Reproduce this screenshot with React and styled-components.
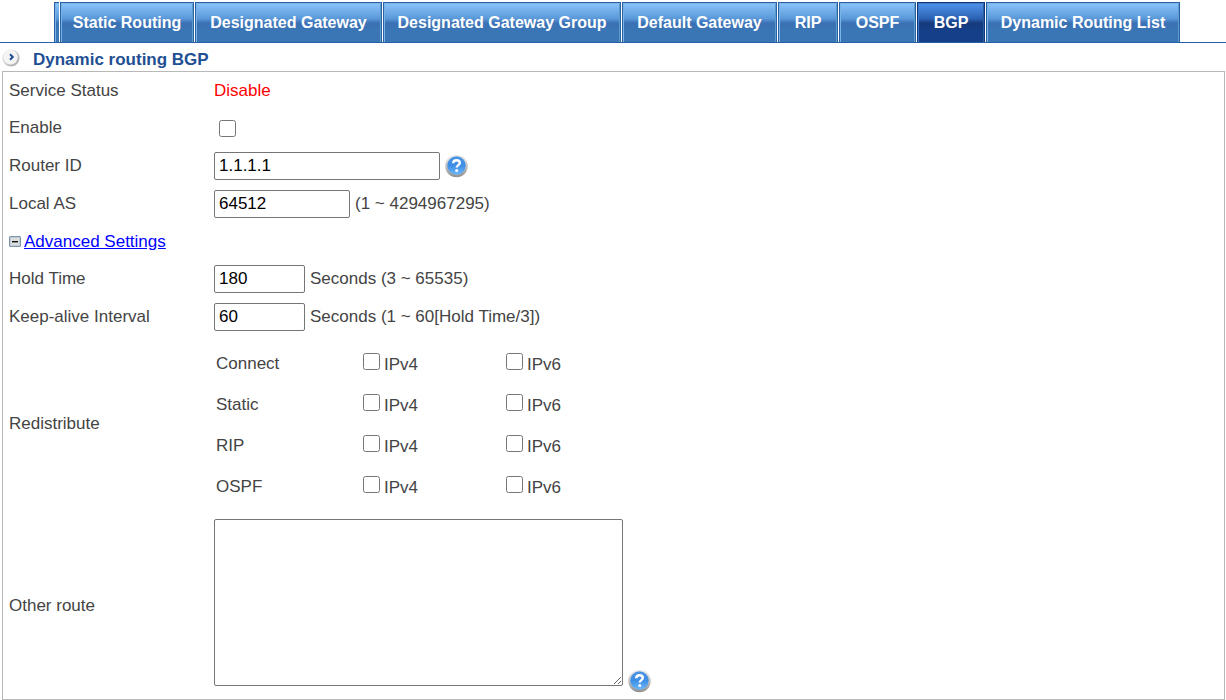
import React, { useState } from "react";
import styled, { createGlobalStyle, css } from "styled-components";

const tabs = [
  { label: "Static Routing", width: 134 },
  { label: "Designated Gateway", width: 187 },
  { label: "Designated Gateway Group", width: 238 },
  { label: "Default Gateway", width: 155 },
  { label: "RIP", width: 60 },
  { label: "OSPF", width: 77 },
  { label: "BGP", width: 68 },
  { label: "Dynamic Routing List", width: 194 },
];

const sources = ["Connect", "Static", "RIP", "OSPF"];
const versions = ["IPv4", "IPv6"];

function HelpIcon() {
  return (
    <svg width="24" height="24" viewBox="0 0 24 24" aria-hidden="true">
      <defs>
        <linearGradient id="helpRing" x1="0" y1="0" x2="0" y2="1">
          <stop offset="0" stopColor="#f0f0f0" />
          <stop offset="0.5" stopColor="#c4c4c4" />
          <stop offset="1" stopColor="#8f8f8f" />
        </linearGradient>
        <linearGradient id="helpFill" x1="0" y1="0" x2="0" y2="1">
          <stop offset="0" stopColor="#4c94e4" />
          <stop offset="0.5" stopColor="#3d8ee6" />
          <stop offset="1" stopColor="#6cb8fa" />
        </linearGradient>
      </defs>
      <circle cx="11.5" cy="12" r="11.3" fill="url(#helpRing)" />
      <circle cx="11.5" cy="11.5" r="9.2" fill="url(#helpFill)" />
      <path
        d="M8.2 9.3C8.300 7.300 9.700 6.300 11.500 6.300c2 0 3.300 1 3.300 2.700 0 2.200-3.100 2.100-3.100 4.600"
        fill="none"
        stroke="#fff"
        strokeWidth="2.4"
      />
      <circle cx="11.700" cy="16.600" r="1.500" fill="#fff" />
    </svg>
  );
}

function TitleIcon() {
  return (
    <svg width="18" height="18" viewBox="0 0 18 18" aria-hidden="true">
      <defs>
        <linearGradient id="titleRing" x1="0" y1="0" x2="1" y2="1">
          <stop offset="0" stopColor="#ececec" />
          <stop offset="1" stopColor="#a8a8a8" />
        </linearGradient>
      </defs>
      <circle cx="9" cy="9" r="8.6" fill="url(#titleRing)" />
      <circle cx="8.5" cy="8.3" r="7.2" fill="#f4f4f4" />
      <path d="M8 5.200l2.800 2.800L8 10.800" fill="none" stroke="#24508f" strokeWidth="2" />
    </svg>
  );
}

function MinusIcon() {
  return (
    <svg width="12" height="11" viewBox="0 0 12 11" aria-hidden="true">
      <rect x="0.5" y="0.5" width="11" height="10" rx="0.5" fill="#dcdedc" stroke="#8094a8" />
      <rect x="1.5" y="1.5" width="9" height="8" fill="none" stroke="#c0ccd8" />
      <rect x="3" y="5" width="6" height="1.4" fill="#111" />
    </svg>
  );
}

function App() {
  const [enable, setEnable] = useState(false);
  const [routerId, setRouterId] = useState("1.1.1.1");
  const [localAs, setLocalAs] = useState("64512");
  const [holdTime, setHoldTime] = useState("180");
  const [keepAlive, setKeepAlive] = useState("60");
  const [otherRoute, setOtherRoute] = useState("");
  const [advanced, setAdvanced] = useState(true);

  const toggleAdvanced = (e) => {
    e.preventDefault();
    setAdvanced(!advanced);
  };

  return (
    <>
      <GlobalStyle />
      <TabBar>
        <TabEdge />
        {tabs.map((tab) => (
          <Tab key={tab.label} href="#" $width={tab.width} $active={tab.label === "BGP"}>
            {tab.label}
          </Tab>
        ))}
      </TabBar>
      <TitleBar>
        <TitleIcon />
        <h1>Dynamic routing BGP</h1>
      </TitleBar>
      <Panel>
        <Row $plain>
          <span>Service Status</span>
          <Status>Disable</Status>
        </Row>
        <Row>
          <label htmlFor="enable">Enable</label>
          <Field>
            <EnableBox
              id="enable"
              checked={enable}
              onChange={(e) => setEnable(e.target.checked)}
            />
          </Field>
        </Row>
        <Row>
          <label htmlFor="routerId">Router ID</label>
          <Field>
            <TextInput
              id="routerId"
              $width={226}
              value={routerId}
              onChange={(e) => setRouterId(e.target.value)}
            />
            <HelpButton type="button" aria-label="Router ID help">
              <HelpIcon />
            </HelpButton>
          </Field>
        </Row>
        <Row>
          <label htmlFor="localAs">Local AS</label>
          <Field>
            <TextInput
              id="localAs"
              $width={136}
              value={localAs}
              onChange={(e) => setLocalAs(e.target.value)}
            />
            <span>(1 ~ 4294967295)</span>
          </Field>
        </Row>
        <Row $plain>
          <Advanced href="#" onClick={toggleAdvanced}>
            <MinusIcon />
            <span>Advanced Settings</span>
          </Advanced>
        </Row>
        {advanced && (
          <>
            <Row>
              <label htmlFor="holdTime">Hold Time</label>
              <Field>
                <TextInput
                  id="holdTime"
                  $width={91}
                  value={holdTime}
                  onChange={(e) => setHoldTime(e.target.value)}
                />
                <span>Seconds (3 ~ 65535)</span>
              </Field>
            </Row>
            <Row>
              <label htmlFor="keepAlive">Keep-alive Interval</label>
              <Field>
                <TextInput
                  id="keepAlive"
                  $width={91}
                  value={keepAlive}
                  onChange={(e) => setKeepAlive(e.target.value)}
                />
                <span>Seconds (1 ~ 60[Hold Time/3])</span>
              </Field>
            </Row>
            <Row>
              <span>Redistribute</span>
              <Redistribute>
                {sources.map((source) => (
                  <SourceRow key={source}>
                    <span>{source}</span>
                    {versions.map((version) => (
                      <CheckLabel key={version}>
                        <Checkbox />
                        {version}
                      </CheckLabel>
                    ))}
                  </SourceRow>
                ))}
              </Redistribute>
            </Row>
            <Row>
              <label htmlFor="otherRoute">Other route</label>
              <AreaField>
                <TextArea
                  id="otherRoute"
                  value={otherRoute}
                  onChange={(e) => setOtherRoute(e.target.value)}
                />
                <HelpButton type="button" aria-label="Other route help">
                  <HelpIcon />
                </HelpButton>
              </AreaField>
            </Row>
          </>
        )}
      </Panel>
    </>
  );
}

const GlobalStyle = createGlobalStyle`
  * {
    box-sizing: border-box;
  }
  body {
    margin: 0;
    background: #fff;
    color: #444;
    font-family: "Liberation Sans", Arial, sans-serif;
    font-size: 17px;
    line-height: 20px;
  }
`;

const tabFill = css`
  background: linear-gradient(#8cc4fb, #5a98d8 40%, #3a70b4 52%, #3a76b6 70%);
  border: 1px solid #2a60a6;
  border-bottom: none;
  box-shadow: inset 1px 1px #7ab4e4, inset -1px 0 #5c9cc8;
`;

const TabBar = styled.nav`
  display: flex;
  gap: 1px;
  padding: 2px 0 0 54px;
  border-bottom: 1px solid #2a60a6;
`;

const TabEdge = styled.span`
  ${tabFill}
  width: 5px;
  border-right: none;
  box-shadow: inset 1px 1px #7ab4e4;
`;

const Tab = styled.a`
  ${tabFill}
  width: ${(props) => props.$width}px;
  height: 40px;
  color: #fff;
  font-size: 16px;
  font-weight: bold;
  line-height: 40px;
  text-align: center;
  white-space: nowrap;
  text-decoration: none;

  ${(props) =>
    props.$active &&
    css`
      background: linear-gradient(#5094ec, #2c62b4 40%, #163a7c 52%, #153f88 70%);
      border-color: #12367a;
      box-shadow: inset 1px 1px #3c78c8, inset -1px 0 #2a609c;
    `}
`;

const TitleBar = styled.header`
  display: flex;
  align-items: center;
  gap: 13px;
  height: 28px;
  padding: 2px 2px 0;

  > h1 {
    margin: 0;
    padding-top: 3px;
    color: #1f4f93;
    font-size: 17px;
  }
`;

const Panel = styled.form`
  margin: 0 1px 0 2px;
  border: 1px solid #b8b8b8;
`;

const Row = styled.div`
  display: grid;
  grid-template-columns: 205px 1fr;
  align-items: center;
  min-height: ${(props) => (props.$plain ? 37 : 38)}px;
  padding: 0 6px;
`;

const Status = styled.span`
  color: #f00;
`;

const Field = styled.div`
  display: flex;
  align-items: center;
  gap: 5px;
`;

const TextInput = styled.input`
  width: ${(props) => props.$width}px;
  height: 28px;
  padding: 0 4px;
  border: 1px solid #767676;
  border-radius: 2px;
  color: #000;
  font: inherit;
`;

const Checkbox = styled.input.attrs({ type: "checkbox" })`
  width: 17px;
  height: 17px;
  margin: 0;
`;

const EnableBox = styled(Checkbox)`
  margin-left: 5px;
`;

const HelpButton = styled.button`
  display: flex;
  padding: 0;
  border: none;
  background: none;
  cursor: pointer;
`;

const Advanced = styled.a`
  display: flex;
  align-items: center;
  gap: 3px;
  color: #00f;
  text-decoration: none;

  > span {
    text-decoration: underline;
  }
`;

const Redistribute = styled.div`
  padding: 7px 2px 5px;
`;

const SourceRow = styled.div`
  display: grid;
  grid-template-columns: 147px 143px 1fr;
  align-items: center;
  height: 41px;
`;

const CheckLabel = styled.label`
  display: flex;
  align-items: baseline;
  gap: 4px;
`;

const AreaField = styled(Field)`
  align-items: flex-end;
  padding: 7px 0 6px;
`;

const TextArea = styled.textarea`
  width: 409px;
  height: 167px;
  margin-bottom: 7px;
  padding: 4px;
  border: 1px solid #767676;
  border-radius: 2px;
  font: inherit;
`;

export default App;
